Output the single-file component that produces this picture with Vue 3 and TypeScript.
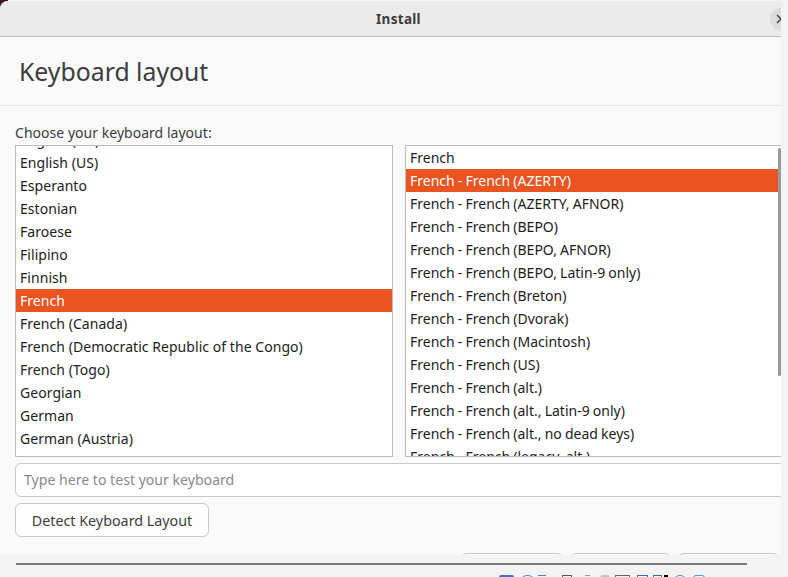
<script setup lang="ts">
const leftItems: string[] = [
  'English (UK)',
  'English (US)',
  'Esperanto',
  'Estonian',
  'Faroese',
  'Filipino',
  'Finnish',
  'French',
  'French (Canada)',
  'French (Democratic Republic of the Congo)',
  'French (Togo)',
  'Georgian',
  'German',
  'German (Austria)',
  'German (Switzerland)',
]
const rightItems: string[] = [
  'French',
  'French - French (AZERTY)',
  'French - French (AZERTY, AFNOR)',
  'French - French (BEPO)',
  'French - French (BEPO, AFNOR)',
  'French - French (BEPO, Latin-9 only)',
  'French - French (Breton)',
  'French - French (Dvorak)',
  'French - French (Macintosh)',
  'French - French (US)',
  'French - French (alt.)',
  'French - French (alt., Latin-9 only)',
  'French - French (alt., no dead keys)',
  'French - French (legacy, alt.)',
]
</script>

<template>
  <div class="screen">
    <div class="window">
      <header class="titlebar">
        <span class="title">Install</span>
        <span class="close">
          <svg width="10" height="10" viewBox="0 0 10 10">
            <path d="M1 1 L9 9 M9 1 L1 9" stroke="#3d3d3d" stroke-width="1.4" fill="none" />
          </svg>
        </span>
      </header>
      <div class="heading"><h1>Keyboard layout</h1></div>
      <main class="content">
        <label class="prompt">Choose your keyboard layout:</label>
        <div class="lists">
          <div class="list left">
            <div class="rows left-rows">
              <div v-for="item in leftItems" :key="item" class="row" :class="{ selected: item === 'French' }">{{ item }}</div>
            </div>
          </div>
          <div class="list right">
            <div class="rows right-rows">
              <div v-for="item in rightItems" :key="item" class="row" :class="{ selected: item === 'French - French (AZERTY)' }">{{ item }}</div>
            </div>
            <div class="thumb"></div>
          </div>
        </div>
        <div class="entry">Type here to test your keyboard</div>
        <button class="detect">Detect Keyboard Layout</button>
      </main>
      <footer class="actions">
        <span class="action a1"></span>
        <span class="action a2"></span>
        <span class="action a3"></span>
      </footer>
    </div>
    <div class="progress"></div>
    <div class="dots">
      <i class="d i1"></i><i class="d i2"></i><i class="d i3"></i>
      <i class="d i4"></i><i class="d i5"></i><i class="d i6"></i><i class="d i7"></i>
      <i class="d i8"></i><i class="d i9"></i><i class="d i10"></i><i class="d i11"></i><i class="d i12"></i>
    </div>
  </div>
</template>

<style>
html, body { margin: 0; background: #f4f4f4; }
</style>

<style scoped>
.screen {
  position: relative;
  width: 788px;
  height: 577px;
  overflow: hidden;
  background: #f3f3f3;
  font-family: "Noto Sans", "Open Sans", sans-serif;
  color: #3d3d3d;
}
.screen::before {
  content: "";
  position: absolute;
  left: 0;
  top: 0;
  width: 8px;
  height: 8px;
  background: #3a1230;
}
.window {
  position: relative;
  width: 781px;
  height: 554px;
  margin-top: 1px;
  background: #fafafa;
  border-radius: 8px 0 0 0;
  overflow: hidden;
}
.titlebar {
  height: 35px;
  background: #ebebeb;
  border-bottom: 1px solid #bdbdbd;
  display: flex;
  align-items: center;
  justify-content: center;
  position: relative;
}
.title {
  font-size: 13.5px;
  font-weight: 700;
  letter-spacing: 0.3px;
  color: #3d3d3d;
  margin-left: 16px;
}
.close {
  position: absolute;
  left: 770px;
  top: 7px;
  width: 22px;
  height: 22px;
  border-radius: 50%;
  background: #dcdcdc;
  display: flex;
  align-items: center;
  padding-left: 6px;
  box-sizing: border-box;
}
.heading {
  height: 68px;
  padding-left: 19px;
  border-bottom: 1px solid #e3e3e3;
  display: flex;
  align-items: center;
}
h1 {
  margin: 0 0 1px;
  font-size: 24.8px;
  font-weight: 400;
  color: #3d3d3d;
}
.content {
  padding: 16px 0 0 15px;
}
.prompt {
  display: block;
  font-size: 14px;
  letter-spacing: 0.03px;
  line-height: 22px;
  height: 23px;
  color: #3d3d3d;
}
.lists {
  display: flex;
  gap: 12px;
  height: 312px;
}
.list {
  position: relative;
  flex: none;
  box-sizing: border-box;
  height: 312px;
  background: #fff;
  border: 1px solid #bdbdbd;
  overflow: hidden;
}
.left { width: 378px; }
.right { width: 376px; border-right: none; }
.left-rows { margin-top: -18px; letter-spacing: 0.05px; }
.right-rows { word-spacing: -0.5px; }
.row {
  height: 23px;
  line-height: 23px;
  padding-left: 4px;
  font-size: 14px;
  color: #1c1c1c;
  white-space: nowrap;
}
.selected {
  background: #e95420;
  color: #fff;
}
.thumb {
  position: absolute;
  right: 0;
  top: 2px;
  width: 3px;
  height: 228px;
  border-radius: 2px;
  background: #999;
}
.entry {
  box-sizing: border-box;
  width: 770px;
  height: 34px;
  margin-top: 6px;
  padding-left: 8px;
  line-height: 32px;
  font-size: 14.1px;
  color: #8a8a8a;
  background: #fff;
  border: 1px solid #c9c9c9;
  border-radius: 6px;
}
.detect {
  display: block;
  box-sizing: border-box;
  width: 194px;
  height: 34px;
  margin-top: 6px;
  padding: 0;
  font: inherit;
  font-size: 14.3px;
  color: #3d3d3d;
  background: #fdfdfd;
  border: 1px solid #c9c9c9;
  border-radius: 6px;
}
.actions {
  display: flex;
  gap: 7px;
  margin: 16px 0 0 461px;
}
.action {
  box-sizing: border-box;
  height: 30px;
  background: #fdfdfd;
  border: 1px solid #c4c4c4;
  border-radius: 6px;
}
.a1 { width: 102px; }
.a2 { width: 101px; }
.a3 { width: 101px; }
.progress {
  width: 731px;
  height: 2px;
  margin: 8px 0 0 16px;
  background: #7b7b7b;
}
.dots {
  position: absolute;
  left: 499px;
  top: 575px;
  display: flex;
}
.d {
  display: block;
  flex: none;
  height: 6px;
  box-sizing: border-box;
}
.i1 { width: 15px; background: #3a78c8; border-radius: 2px; }
.i2 { width: 11px; margin-left: 8px; border: 1.5px solid #4b86d0; border-radius: 50%; }
.i3 { width: 8px; margin-left: 5px; border-top: 1.5px solid #4b86d0; }
.i4 { width: 10px; margin-left: 16px; border: 1px solid #555; }
.i5 { width: 5px; margin-left: 13px; border-top: 1.5px solid #999; }
.i6 { width: 10px; margin-left: 10px; background: #c4c4c4; border-radius: 3px; }
.i7 { width: 15px; margin-left: 5px; border: 1px solid #666; }
.i8 { width: 11px; margin-left: 7px; border: 1.5px solid #3c68b8; }
.i9 { width: 9px; margin-left: 5px; border: 1.5px solid #3c68b8; }
.i10 { width: 4px; margin-left: 2px; background: #000; }
.i11 { width: 10px; margin-left: 7px; border: 1.5px solid #4b86d0; border-radius: 50%; }
.i12 { width: 12px; margin-left: 8px; border: 1.5px solid #4b9ad8; border-radius: 3px; }
</style>
